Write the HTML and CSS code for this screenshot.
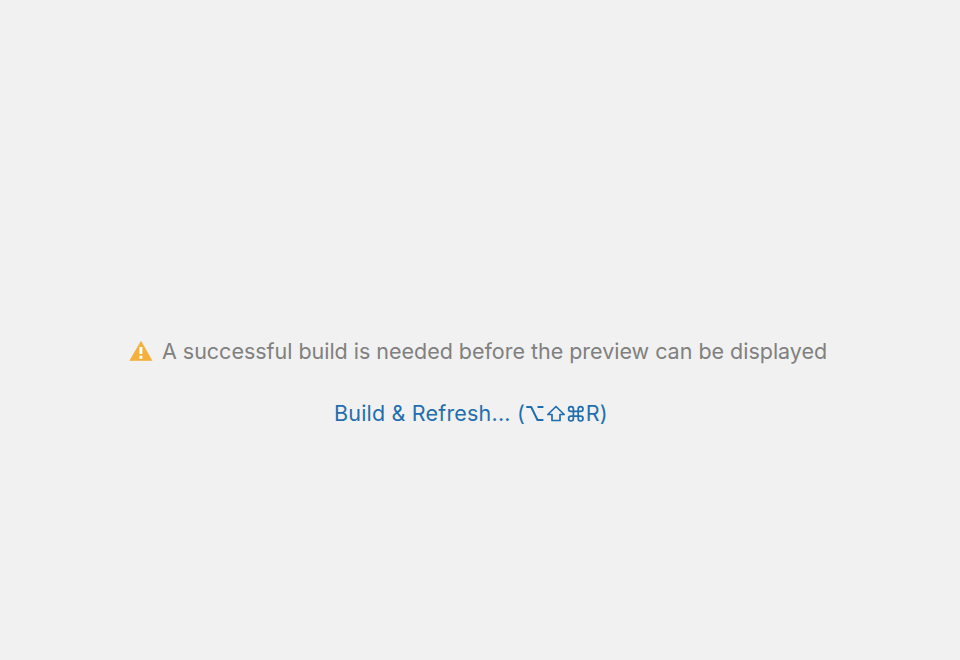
FILE: index.html
```html
<!DOCTYPE html>
<html lang="en">
<head>
<meta charset="utf-8">
<title>Preview</title>
<link rel="stylesheet" href="styles.css">
</head>
<body>
<main class="panel">
  <div class="message">
    <svg class="warning" viewBox="0 0 24 22" aria-hidden="true">
      <path d="M12 1.300 23 20.500H.8Z" fill="#f4af3d" stroke="#f4af3d" stroke-width=".6" stroke-linejoin="round"/>
      <path d="M10.400 7h3v7h-3zM10.400 15.800h3v3h-3z" fill="#fff"/>
    </svg>
    <span class="message-text">A successful build is needed before the preview can be displayed</span>
  </div>
  <a class="action"><span class="label">Build &amp; Refresh... (</span><svg class="keys" viewBox="0 0 60 22" aria-hidden="true">
    <path d="M1.300 5h4.900l6.300 13h5.900M12.500 5h5.900" stroke-width="2" stroke-linejoin="round"/>
    <path d="M31 4.500 39.200 12.500H35V18.500H27V12.500H22.800Z" stroke-linejoin="round"/>
    <path d="M48.400 9.400h4.800v4.800h-4.800zM48.400 9.400h-2.400a2.400 2.400 0 1 1 2.400-2.400zM53.200 9.400V7a2.400 2.400 0 1 1 2.400 2.400zM53.200 14.200h2.400a2.400 2.400 0 1 1-2.400 2.400zM48.400 14.200v2.400a2.400 2.400 0 1 1-2.400-2.400z"/>
  </svg><span class="label-end">R)</span></a>
</main>
</body>
</html>
```
FILE: styles.css
```css
body {
  margin: 0;
  background: #f1f1f1;
  font-family: Inter, sans-serif;
  font-size: 21.5px;
  line-height: 30px;
}
.panel {
  box-sizing: border-box;
  height: 660px;
  padding-top: 336px;
}
.message {
  display: flex;
  padding-left: 129px;
  color: #808080;
}
.message-text {
  letter-spacing: -0.02px;
  white-space: nowrap;
}
.warning {
  width: 24px;
  height: 22px;
  margin: 4px 9px 0 0;
}
.action {
  display: flex;
  margin-top: 32px;
  padding-left: 334px;
  color: #1f6fb0;
}
.label {
  width: 191px;
  letter-spacing: 0.19px;
  white-space: nowrap;
}
.label-end {
  margin-left: 0.7px;
  letter-spacing: 0.3px;
}
.keys {
  width: 60px;
  height: 22px;
  margin-top: 4px;
  fill: none;
  stroke: currentColor;
  stroke-width: 1.7;
}
```
